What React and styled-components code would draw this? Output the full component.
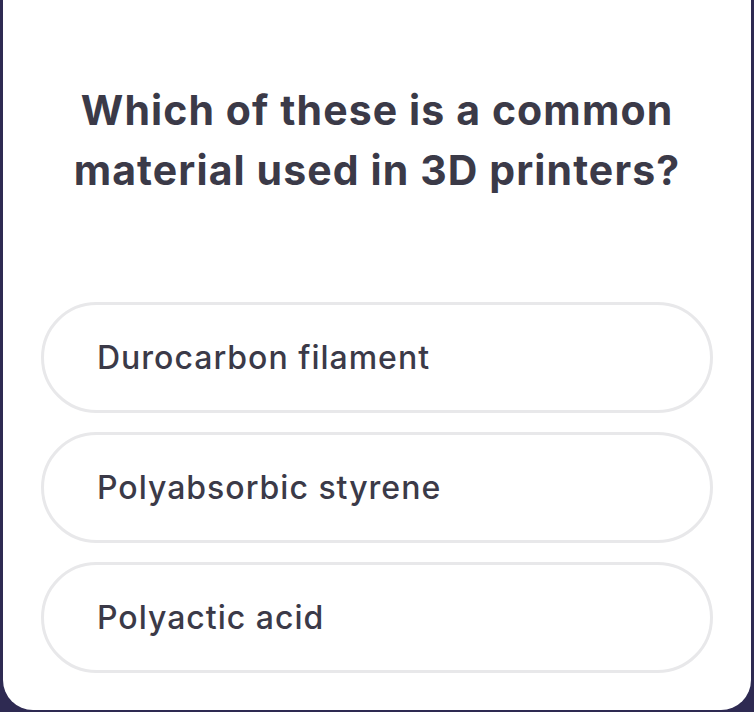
import React from 'react'
import styled, { createGlobalStyle } from 'styled-components'

const GlobalStyle = createGlobalStyle`
    html, body {
        margin: 0;
        padding: 0;
        background-color: #2e2a52;
    }
    body {
        font-family: 'Inter', 'Lato', 'Liberation Sans', sans-serif;
    }
`

const Screen = styled.div`
    width: 754px;
    height: 712px;
    display: flex;
    justify-content: center;
    overflow: hidden;
`

const Card = styled.div`
    width: 748px;
    height: 710px;
    background-color: #ffffff;
    border-radius: 0 0 30px 30px;
    padding: 80px 38px 0;
    box-sizing: border-box;
    display: flex;
    flex-direction: column;
`

const Question = styled.h1`
    margin: 0;
    text-align: center;
    font-size: 41px;
    line-height: 60px;
    font-weight: 700;
    color: #3b3a48;
    letter-spacing: 1.1px;
`

const Options = styled.div`
    margin-top: 102px;
    display: flex;
    flex-direction: column;
    gap: 19px;
`

const Option = styled.button`
    height: 111px;
    width: 100%;
    box-sizing: border-box;
    border: 3px solid #e8e8ea;
    border-radius: 56px;
    background: #ffffff;
    padding: 0 0 0 53px;
    text-align: left;
    font-family: inherit;
    font-size: 32px;
    font-weight: 500;
    letter-spacing: 1px;
    color: #3b3a48;
    cursor: pointer;
`

const answers = ['Durocarbon filament', 'Polyabsorbic styrene', 'Polyactic acid']

function App() {
    return (
        <Screen>
            <GlobalStyle />
            <Card>
                <Question>Which of these is a common material used in 3D printers?</Question>
                <Options>
                    {answers.map(a => <Option key={a}>{a}</Option>)}
                </Options>
            </Card>
        </Screen>
    )
}

export default App
